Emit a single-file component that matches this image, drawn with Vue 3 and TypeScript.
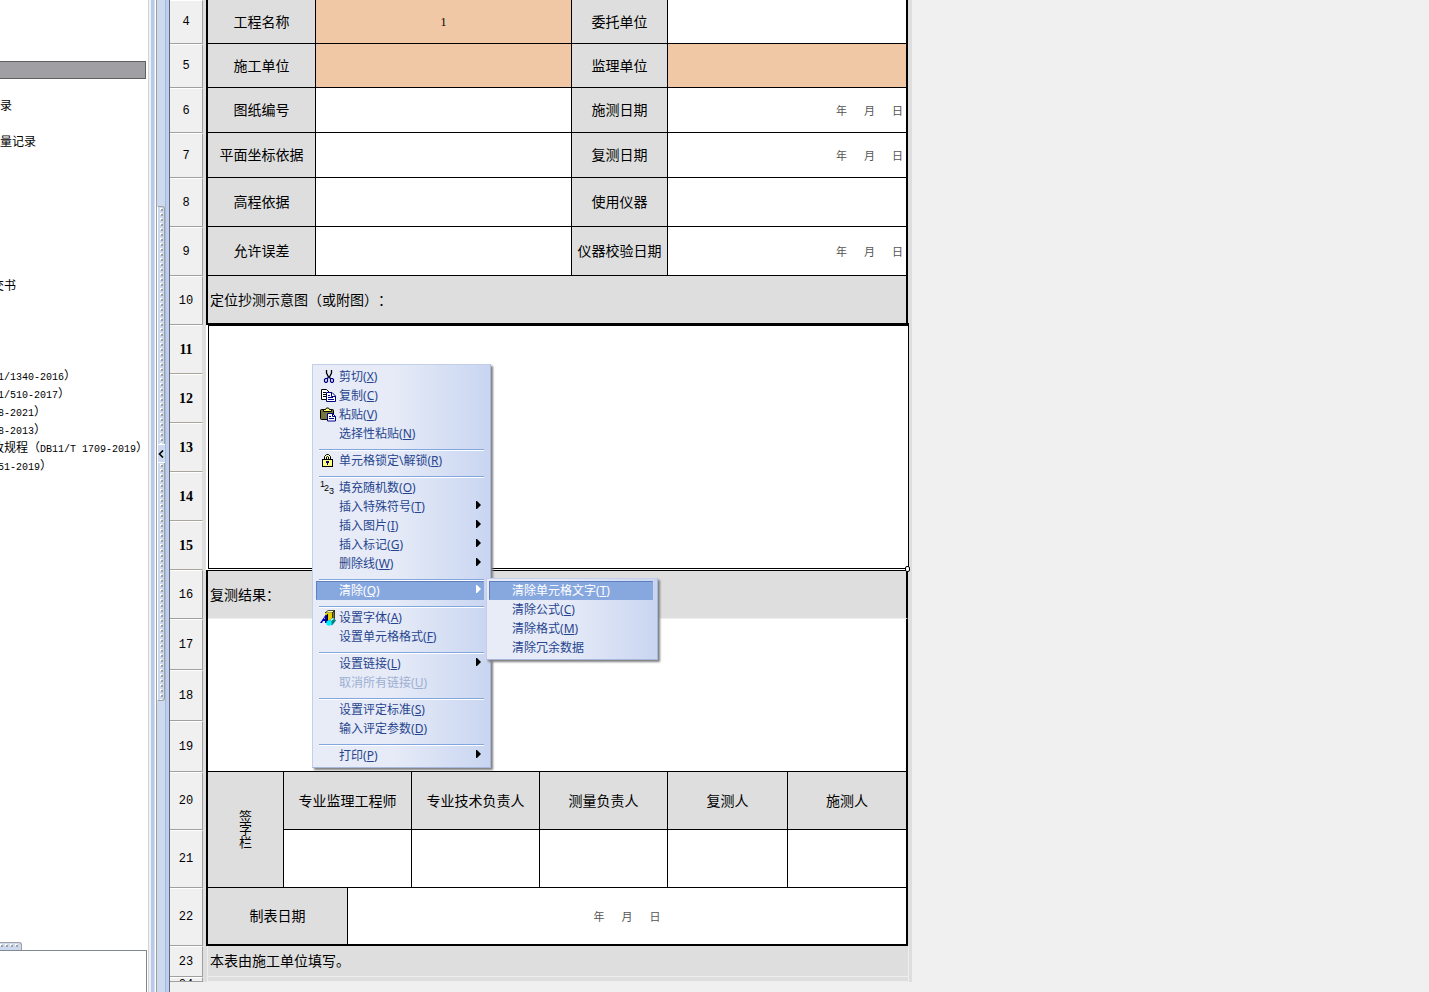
<script setup lang="ts">
interface TreeRow { cjk?: string; latin?: string; tail?: string; offset?: string; selected?: boolean }
interface Cell { text?: string; cols: number; rows?: number; kind: string }
interface Row { no: number; height: number; cells: Cell[]; zone?: string }
interface MenuItem { text?: string; key?: string; icon?: string; sub?: boolean; active?: boolean; disabled?: boolean; sep?: boolean }

const blank = (n: number): TreeRow[] => Array.from({ length: n }, () => ({}))
const tree: TreeRow[] = [
  ...blank(3), { selected: true }, {}, { cjk: '录', offset: 'far' }, {}, { cjk: '量记录', offset: 'far' },
  ...blank(7), { cjk: '交书' }, ...blank(4),
  { latin: '1/1340-2016', tail: '）', offset: 'near' },
  { latin: '1/510-2017', tail: '）', offset: 'near' },
  { latin: '8-2021', tail: '）', offset: 'near' },
  { latin: '8-2013', tail: '）', offset: 'near' },
  { cjk: '改规程（', latin: 'DB11/T 1709-2019', tail: '）' },
  { latin: '51-2019', tail: '）', offset: 'near' },
]

const columns = [33, 5, 76, 32, 32, 64, 128, 32, 96, 120, 120, 4]

const pair = (no: number, height: number, a: string, b: string, k1 = '', k2 = '', v = ''): Row => ({
  no, height, cells: [
    { text: a, cols: 2, kind: 'label' }, { text: v, cols: 4, kind: 'value ' + k1 },
    { text: b, cols: 1, kind: 'label' }, { cols: 2, kind: 'value last ' + k2 },
  ],
})
const rows: Row[] = [
  pair(4, 44, '工程名称', '委托单位', 'tint', '', '1'),
  pair(5, 44, '施工单位', '监理单位', 'tint', 'tint'),
  pair(6, 45, '图纸编号', '施测日期', '', 'date'),
  pair(7, 45, '平面坐标依据', '复测日期', '', 'date'),
  pair(8, 49, '高程依据', '使用仪器'),
  pair(9, 49, '允许误差', '仪器校验日期', '', 'date'),
  { no: 10, height: 49, cells: [{ text: '定位抄测示意图（或附图）：', cols: 9, kind: 'label left last' }] },
  { no: 11, height: 49, zone: 'picked', cells: [{ cols: 9, rows: 5, kind: 'canvas' }] },
  { no: 12, height: 49, zone: 'picked', cells: [] },
  { no: 13, height: 49, zone: 'picked', cells: [] },
  { no: 14, height: 49, zone: 'picked', cells: [] },
  { no: 15, height: 49, zone: 'picked', cells: [] },
  { no: 16, height: 49, cells: [{ text: '复测结果：', cols: 9, kind: 'label left last result' }] },
  { no: 17, height: 51, cells: [{ cols: 9, rows: 3, kind: 'value last' }] },
  { no: 18, height: 51, cells: [] },
  { no: 19, height: 51, cells: [] },
  { no: 20, height: 58, cells: [
    { text: '签字栏', cols: 1, rows: 2, kind: 'label upright' },
    { text: '专业监理工程师', cols: 3, kind: 'label' }, { text: '专业技术负责人', cols: 1, kind: 'label' },
    { text: '测量负责人', cols: 2, kind: 'label' }, { text: '复测人', cols: 1, kind: 'label' },
    { text: '施测人', cols: 1, kind: 'label last' },
  ] },
  { no: 21, height: 58, cells: [
    { cols: 3, kind: 'value' }, { cols: 1, kind: 'value' }, { cols: 2, kind: 'value' },
    { cols: 1, kind: 'value' }, { cols: 1, kind: 'value last' },
  ] },
  { no: 22, height: 58, cells: [
    { text: '制表日期', cols: 3, kind: 'label floor' }, { cols: 6, kind: 'value last floor date middle' },
  ] },
  { no: 23, height: 31, zone: 'outer', cells: [{ text: '本表由施工单位填写。', cols: 9, kind: 'label left note' }] },
  { no: 24, height: 5, zone: 'outer', cells: [{ cols: 9, kind: 'label note' }] },
]

const menu: MenuItem[] = [
  { text: '剪切', key: 'X', icon: 'cut' }, { text: '复制', key: 'C', icon: 'copy' },
  { text: '粘贴', key: 'V', icon: 'paste' }, { text: '选择性粘贴', key: 'N' }, { sep: true },
  { text: '单元格锁定\\解锁', key: 'R', icon: 'lock' }, { sep: true },
  { text: '填充随机数', key: 'O', icon: 'num' }, { text: '插入特殊符号', key: 'T', sub: true },
  { text: '插入图片', key: 'I', sub: true }, { text: '插入标记', key: 'G', sub: true },
  { text: '删除线', key: 'W', sub: true }, { sep: true },
  { text: '清除', key: 'Q', sub: true, active: true }, { sep: true },
  { text: '设置字体', key: 'A', icon: 'font' }, { text: '设置单元格格式', key: 'F' }, { sep: true },
  { text: '设置链接', key: 'L', sub: true }, { text: '取消所有链接', key: 'U', disabled: true }, { sep: true },
  { text: '设置评定标准', key: 'S' }, { text: '输入评定参数', key: 'D' }, { sep: true },
  { text: '打印', key: 'P', sub: true },
]
const submenu: MenuItem[] = [
  { text: '清除单元格文字', key: 'T', active: true }, { text: '清除公式', key: 'C' },
  { text: '清除格式', key: 'M' }, { text: '清除冗余数据' },
]
</script>

<template>
  <div class="app">
    <aside class="side">
      <ul class="tree">
        <li v-for="(r, i) in tree" :key="i" :class="[r.offset, { selected: r.selected }]">
          <template v-if="r.cjk">{{ r.cjk }}</template><span v-if="r.latin" class="latin">{{ r.latin }}</span><template v-if="r.tail">{{ r.tail }}</template>
        </li>
      </ul>
      <div class="side-grip">
        <svg width="20" height="6" aria-hidden="true">
          <g v-for="n in 4" :key="n"><rect :x="n * 5 - 5" y="1" width="2" height="2" fill="#fff" /><rect :x="n * 5 - 4" y="2" width="2" height="2" fill="#a0a0a0" /></g>
        </svg>
      </div>
      <div class="side-panel"></div>
    </aside>

    <div class="splitter">
      <div class="rail">
        <div class="grip">
          <svg class="dots" aria-hidden="true">
            <defs><pattern id="dots" width="8" height="5" patternUnits="userSpaceOnUse"><rect x="3" y="1" width="2" height="2" fill="#fff" /><rect x="4" y="2" width="2" height="2" fill="#a0a0a0" /></pattern></defs>
            <rect width="100%" height="100%" fill="url(#dots)" />
          </svg>
          <button class="collapse" type="button" aria-label="收起">
            <svg width="6" height="8" viewBox="0 0 6 8"><path d="M5 0.5 L1.5 4 L5 7.5" fill="none" stroke="#000" stroke-width="1.6" /></svg>
          </button>
          <svg class="dots" aria-hidden="true"><rect width="100%" height="100%" fill="url(#dots)" /></svg>
        </div>
      </div>
    </div>

    <main class="sheet">
      <table class="grid">
        <colgroup><col v-for="(w, i) in columns" :key="i" :style="{ width: w + 'px' }"></colgroup>
        <tbody>
          <tr v-for="row in rows" :key="row.no" :class="row.zone" :style="{ height: row.height + 'px' }">
            <th class="row-no" scope="row"><div :class="{ cut: row.height < 10 }">{{ row.no }}</div></th>
            <td class="gutter"></td>
            <td v-for="(c, i) in row.cells" :key="i" :colspan="c.cols" :rowspan="c.rows || 1" :class="c.kind">
              <div v-if="c.kind.includes('date')" class="ymd"><span>年</span><span>月</span><span>日</span></div>
              <div v-else-if="c.kind === 'canvas'" class="selection"><i class="knob"></i></div>
              <div v-else>{{ c.text }}</div>
            </td>
            <td class="edge"></td>
          </tr>
        </tbody>
      </table>

      <ul class="menu main-menu" role="menu">
        <li v-for="(m, i) in menu" :key="i" role="none" :class="{ sep: m.sep }">
          <button v-if="!m.sep" type="button" role="menuitem" :disabled="m.disabled" :class="{ active: m.active }">
            <span class="icon">
              <svg v-if="m.icon === 'cut'" width="16" height="16" viewBox="0 0 16 16" fill="none">
                <path d="M6.500 1v3l2.500 5M11.500 1v3L9 9" stroke="#000" stroke-width="1.3" />
                <path d="M8.500 8.500 6.500 9.500H5.500L4.500 10.500v2l1 1h1l1-1V9M9.500 8.500l1 1v3l1 1h1l1-1v-2l-1-1H11" stroke="#000080" stroke-width="1.2" />
              </svg>
              <svg v-else-if="m.icon === 'copy'" width="16" height="16" viewBox="0 0 16 16">
                <path d="M1.500 1.500h5l2.500 2.500v7.500h-7.500z" fill="#fff" stroke="#000" /><path d="M3 4.500h3M3 6.500h4M3 8.500h4" stroke="#000" />
                <path d="M6.500 4.500H12L15.500 8v5.500h-9z" fill="#fff" stroke="#000080" /><path d="M11.500 4.500v4h4M8 7.500h2M8 9.500h5M8 11.500h6" fill="none" stroke="#000080" />
              </svg>
              <svg v-else-if="m.icon === 'paste'" width="16" height="16" viewBox="0 0 16 16">
                <rect x=".5" y="2.500" width="13" height="10" rx="1" fill="#77773c" stroke="#000" />
                <path d="M3.500 4.500v-2h2l1-1.500h2l1 1.500h2v2z" fill="#ffff70" stroke="#000" />
                <path d="M7.500 6.500h5l3 3v4.500h-8z" fill="#fff" stroke="#000080" /><path d="M12.500 6.500v3h3M9 9.500h2M9 11.500h5" fill="none" stroke="#000080" />
              </svg>
              <svg v-else-if="m.icon === 'lock'" width="16" height="16" viewBox="0 0 16 16">
                <path d="M4.500 6.500V3.500l2-2h2l2 2v3M6.500 6.500V4l1-.5 1 .5v2.500" fill="#ffffc0" stroke="#000" />
                <rect x="2.500" y="6.500" width="10" height="7" fill="#ffff80" stroke="#000" /><path d="M6 8h3v2H8v2H7v-2H6z" fill="#000080" />
              </svg>
              <svg v-else-if="m.icon === 'num'" class="digits" width="16" height="16" viewBox="0 0 16 16">
                <text x="0" y="7">1</text><text x="4" y="11">2</text><text x="9" y="14">3</text>
              </svg>
              <svg v-else-if="m.icon === 'font'" width="16" height="16" viewBox="0 0 16 16">
                <path d="M5 3 8 .5h6.500l-2 2.500z" fill="#ffffa0" stroke="#000" stroke-width=".7" /><path d="M5 3h7.500v8H5z" fill="#e8d000" /><path d="M12.500 3l2-2.500v8l-2 2.500z" fill="#808000" stroke="#000" stroke-width=".7" />
                <path d="M0 13h2l1-2h2v2h2V5H5.500zM4 9l1-2v2z" fill="#0000b0" /><path d="M7.500 4v8H10" fill="none" stroke="#000" />
                <path d="m8 11 5-3.500 3 3-4 5z" fill="#008080" /><path d="m10 10 3-2 1 1-3 2z" fill="#d8ffff" /><circle cx="9" cy="13" r="2.700" fill="#00f0ff" />
              </svg>
            </span>
            <span>{{ m.text }}<template v-if="m.key">(<u>{{ m.key }}</u>)</template></span>
            <svg v-if="m.sub" class="arrow" width="5" height="8" viewBox="0 0 5 8"><path d="M0 0h1l4 4-4 4H0z" fill="currentColor" /></svg>
          </button>
        </li>
      </ul>

      <ul class="menu sub-menu" role="menu">
        <li v-for="m in submenu" :key="m.text" role="none">
          <button type="button" role="menuitem" :class="{ active: m.active }">
            <span class="icon"></span>
            <span>{{ m.text }}<template v-if="m.key">(<u>{{ m.key }}</u>)</template></span>
          </button>
        </li>
      </ul>
    </main>
  </div>
</template>

<style>
body { overflow: hidden; }
</style>

<style scoped>
.app {
  display: flex;
  height: 100vh;
  overflow: hidden;
  background: #f0f0f0;
  font-family: "Liberation Sans", "Noto Sans CJK SC", sans-serif;
  text-spacing-trim: space-all;
  color: #000;
}
.app *, .app *::before { box-sizing: border-box; }
ul { list-style: none; margin: 0; padding: 0; }

.side {
  flex: 0 0 148px;
  display: flex;
  flex-direction: column;
  overflow: hidden;
  background: #fff;
}
.tree { flex: 1; min-height: 0; padding-top: 6px; overflow: hidden; }
.tree li {
  height: 18px;
  line-height: 17px;
  margin-left: -8px;
  font-family: "Noto Sans CJK SC", sans-serif;
  font-size: 12px;
  white-space: nowrap;
}
.tree .near { padding-left: 6px; }
.tree .far { padding-left: 8px; }
.tree .selected { margin: 1px 2px -1px -2px; background: #a09fa3; border: 1px solid #5f5f5f; }
.latin { font-family: "Liberation Mono", monospace; font-size: 10px; }
.side-grip {
  width: 22px;
  height: 8px;
  background: #cdd9ee;
  border-top: 1px solid #a0a0a0;
  border-right: 1px solid #a0a0a0;
  border-top-right-radius: 3px;
}
.side-grip svg { display: block; }
.side-panel { height: 42px; margin-right: 1px; border: 1px solid #808890; border-width: 1px 1px 0 0; }

.splitter {
  flex: 0 0 22px;
  display: flex;
  padding-left: 8px;
  border-right: 1px solid #606878;
  background: linear-gradient(90deg, #d4d4d4 0 1px, #f0f0f0 1px 3px, #b8caec 3px 6px, #d5e0f5 6px 7px, #fff 7px 8px, #bdcef0 8px);
}
.rail {
  width: 10px;
  padding-top: 206px;
  background: #cdd9ee;
  border-left: 1px solid #a0a0a0;
  border-right: 1px solid #a6b7da;
}
.grip {
  display: flex;
  flex-direction: column;
  width: 8px;
  height: 63%;
  border: 1px solid #a0a0a0;
  border-left-color: #fff;
  border-radius: 0 3px 3px 0;
}
.dots { flex: 1; width: 7px; min-height: 0; margin-left: -1px; }
.collapse {
  height: 19px;
  width: 7px;
  padding: 0;
  border: 0;
  border-top: 1px solid #fff;
  border-bottom: 1px solid #fff;
  background: #cdd9ee;
}
.collapse svg { display: block; }

.sheet { position: relative; flex: 1; min-width: 0; overflow: hidden; }
.grid { table-layout: fixed; width: 742px; border-collapse: separate; border-spacing: 0; }
.grid th, .grid td { padding: 0; }
.row-no {
  background: #f0f0f0;
  border: 1px solid #a0a0a0;
  border-top-color: #fff;
  border-left: 0;
  font-family: "Liberation Mono", monospace;
  font-size: 12px;
  font-weight: 400;
  line-height: 14px;
}
.cut { height: 3px; overflow: hidden; }
.gutter { background: #dedede; border-right: 2px solid #000; }
.edge { background: #dedede; }
.picked .row-no {
  border-right-color: #dedede;
  border-bottom-color: #a9a59a;
  font-family: "Liberation Serif", serif;
  font-size: 14px;
  font-weight: 700;
}
.picked .gutter { border-right-color: #fff; }
.outer .gutter { border-right: 1px solid #eee; }
.outer .edge { border-left: 1px solid #eee; }
.label, .value {
  border-right: 1px solid #000;
  border-bottom: 1px solid #000;
  font-size: 14px;
  line-height: 20px;
  text-align: center;
  white-space: nowrap;
}
.label { background: #dedede; }
.value { background: #fff; font-family: "Liberation Serif", serif; font-size: 12px; }
.grid .tint { background: #f0c8a5; }
.grid .last { border-right-width: 2px; }
.grid .floor { border-bottom-width: 2px; }
.grid .left { text-align: left; padding-left: 2px; }
.grid .result { border-top: 1px solid #000; border-bottom: 1px solid #eee; }
.grid .note { border-right: 0; border-bottom: 1px solid #eee; }
.upright div { width: 13px; margin: 0 auto; font-size: 13px; line-height: 13px; white-space: normal; word-break: break-all; }
.ymd {
  display: flex;
  justify-content: flex-end;
  gap: 17px;
  padding-right: 3px;
  font-family: "Noto Sans CJK SC", sans-serif;
  font-size: 11px;
  color: #555;
}
.middle .ymd { justify-content: center; padding: 0; }
.canvas { position: relative; background: #fff; }
.selection {
  position: absolute;
  inset: -2px -1px 1px 0;
  border: 1px solid #000;
  border-top-width: 3px;
}
.knob {
  position: absolute;
  right: -2px;
  bottom: -4px;
  width: 5px;
  height: 6px;
  border: 1px solid #000;
  border-radius: 2px;
  background: #fff;
}

.menu {
  position: absolute;
  padding: 2px 6px 2px 3px;
  border: 1px solid #c3cfe8;
  border-right-color: #a8b8dc;
  border-bottom-color: #a8b8dc;
  background: linear-gradient(90deg, #e8ecf7 0%, #e6ebf7 45%, #c9d5f1 100%);
  box-shadow: 2px 2px 2px #808080;
  font-family: "Noto Sans", "Noto Sans CJK SC", sans-serif;
  font-size: 12px;
}
.main-menu { left: 142px; top: 364px; width: 179px; }
.sub-menu { left: 316px; top: 578px; width: 172px; padding-left: 2px; padding-right: 4px; }
.menu button {
  display: flex;
  align-items: center;
  width: 100%;
  height: 19px;
  padding: 0 2px 0 3px;
  border: 1px solid transparent;
  background: none;
  color: #27458f;
  font: inherit;
  line-height: 17px;
  text-align: left;
  white-space: nowrap;
}
.menu .active { background: #87a7df; border-color: #5f7fbf #87a7df #87a7df #5f7fbf; color: #fff; }
.menu button:disabled { color: #9dafd3; }
.icon { flex: none; width: 19px; height: 16px; }
.icon svg { display: block; }
.digits text { font: 9px "Liberation Sans", sans-serif; fill: #000; }
.arrow { margin-left: auto; margin-bottom: 4px; color: #000; }
.active .arrow { color: #fff; }
.sep { height: 8px; margin-left: 3px; padding-top: 6px; }
.sep::before { content: ""; display: block; height: 2px; border-top: 1px solid #84a6de; border-bottom: 1px solid #fff; }
</style>
